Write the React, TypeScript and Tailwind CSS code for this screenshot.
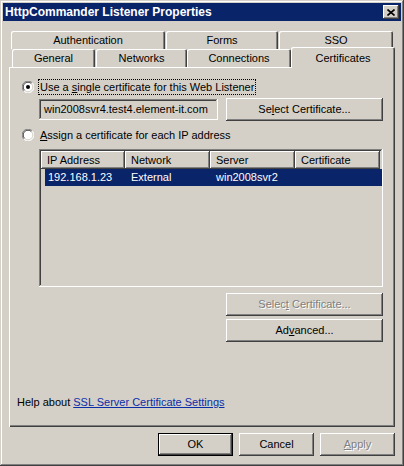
import React from "react";

const raised =
  "shadow-[inset_-1px_-1px_#404040,inset_1px_1px_#ffffff,inset_-2px_-2px_#808080,inset_2px_2px_#d4d0c8]";
const sunken =
  "shadow-[inset_-1px_-1px_#ffffff,inset_1px_1px_#808080,inset_-2px_-2px_#d4d0c8,inset_2px_2px_#404040]";
const tabShadow =
  "shadow-[inset_1px_1px_#ffffff,inset_-1px_0_#404040,inset_-2px_0_#808080]";

function Radio({ checked }: { checked?: boolean }) {
  return (
    <svg width="12" height="12" viewBox="0 0 12 12" className="shrink-0">
      <circle cx="6" cy="6" r="5.5" fill="#ffffff" />
      <path d="M10.2 1.8 A5.9 5.9 0 0 0 1.8 10.2" stroke="#808080" strokeWidth="1" fill="none" />
      <path d="M1.8 10.2 A5.9 5.9 0 0 0 10.2 1.8" stroke="#ffffff" strokeWidth="1" fill="none" />
      <path d="M9.4 2.6 A4.8 4.8 0 0 0 2.6 9.4" stroke="#404040" strokeWidth="1" fill="none" />
      <path d="M2.6 9.4 A4.8 4.8 0 0 0 9.4 2.6" stroke="#d4d0c8" strokeWidth="1" fill="none" />
      {checked && <circle cx="6" cy="6" r="2" fill="#000000" />}
    </svg>
  );
}

function Btn({
  children,
  w,
  disabled,
  def,
}: {
  children: React.ReactNode;
  w: string;
  disabled?: boolean;
  def?: boolean;
}) {
  return (
    <div
      className={`${w} h-[23px] flex items-center justify-center bg-[#d4d0c8] ${raised} ${
        def ? "border border-black" : ""
      } ${disabled ? "text-[#808080] [text-shadow:1px_1px_0_#ffffff]" : "text-black"}`}
    >
      {children}
    </div>
  );
}

function Tab({
  label,
  w,
  className = "",
}: {
  label: string;
  w: string;
  className?: string;
}) {
  return (
    <div
      className={`${w} h-[18px] flex items-center justify-center bg-[#d4d0c8] rounded-t-[2px] ${tabShadow} ${className}`}
    >
      {label}
    </div>
  );
}

export default function App() {
  return (
    <div
      className="w-[404px] h-[466px] bg-[#d4d0c8] p-[3px] flex flex-col text-[11px] text-black shadow-[inset_-1px_-1px_#404040,inset_1px_1px_#d4d0c8,inset_-2px_-2px_#808080,inset_2px_2px_#ffffff]"
      style={{ fontFamily: '"Liberation Sans", Arial, sans-serif' }}
    >
      {/* Title bar */}
      <div className="h-[18px] bg-[#0a246a] flex items-center justify-between pl-[2px] pr-[2px]">
        <span className="text-white font-bold text-[12px] leading-none">
          HttpCommander Listener Properties
        </span>
        <div
          className={`w-[16px] h-[14px] bg-[#d4d0c8] flex items-center justify-center ${raised}`}
        >
          <svg width="8" height="7" viewBox="0 0 8 7">
            <path d="M0.5 0.5 L7.5 6.5 M7.5 0.5 L0.5 6.5" stroke="#000" strokeWidth="1.6" />
          </svg>
        </div>
      </div>

      {/* Tabs row 1 */}
      <div className="flex mt-[10px] ml-[8px] gap-[1px]">
        <Tab label="Authentication" w="w-[154px]" />
        <Tab label="Forms" w="w-[112px]" />
        <Tab label="SSO" w="w-[114px]" />
      </div>
      {/* Tabs row 2 */}
      <div className="flex items-start ml-[9px] h-[18px]">
        <Tab label="General" w="w-[83px]" />
        <Tab label="Networks" w="w-[91px]" className="ml-[1px]" />
        <Tab label="Connections" w="w-[104px]" />
        <div
          className={`w-[104px] h-[21px] mt-[-2px] relative z-10 flex items-start pt-[3px] justify-center bg-[#d4d0c8] rounded-t-[2px] shadow-[inset_1px_1px_#ffffff,inset_-1px_0_#404040,inset_-2px_0_#808080]`}
        >
          Certificates
        </div>
      </div>

      {/* Panel */}
      <div className="ml-[6px] w-[386px] h-[360px] flex flex-col shadow-[inset_1px_1px_#ffffff,inset_-1px_-1px_#404040,inset_-2px_-2px_#808080]">
        {/* Radio 1 */}
        <div className="mt-[12px] h-[16px] flex items-center">
          <div className="ml-[13px]">
            <Radio checked />
          </div>
          <div className="ml-[4px] h-[16px] px-[1px] border border-dotted border-black flex items-center leading-none">
            <span>
              Use a <span className="underline">s</span>ingle certificate for this Web Listener
            </span>
          </div>
        </div>

        {/* Field + button */}
        <div className="mt-[3px] h-[23px] flex items-center">
          <div
            className={`ml-[30px] w-[179px] h-[21px] flex items-center pl-[5px] ${sunken}`}
          >
            win2008svr4.test4.element-it.com
          </div>
          <div className="ml-[8px]">
            <Btn w="w-[157px]">
              <span>
                Se<span className="underline">l</span>ect Certificate...
              </span>
            </Btn>
          </div>
        </div>

        {/* Radio 2 */}
        <div className="mt-[6px] h-[16px] flex items-center">
          <div className="ml-[13px]">
            <Radio />
          </div>
          <div className="ml-[6px] leading-none">
            <span className="underline">A</span>ssign a certificate for each IP address
          </div>
        </div>

        {/* List */}
        <div className={`mt-[6px] ml-[30px] w-[344px] h-[138px] p-[2px] ${sunken}`}>
          <div className="flex h-[18px]">
            {[
              ["IP Address", "w-[84px]"],
              ["Network", "w-[85px]"],
              ["Server", "w-[85px]"],
              ["Certificate", "w-[85px]"],
            ].map(([t, w]) => (
              <div
                key={t}
                className={`${w} h-[18px] flex items-center pl-[6px] shadow-[inset_-1px_-1px_#404040,inset_1px_1px_#ffffff,inset_-2px_-2px_#808080]`}
              >
                {t}
              </div>
            ))}
          </div>
          <div className="ml-[4px] mr-[-1px] h-[17px] bg-[#0a246a] text-white flex items-center">
            <div className="w-[80px] pl-[3px]">192.168.1.23</div>
            <div className="w-[85px] pl-[6px]">External</div>
            <div className="w-[85px] pl-[6px]">win2008svr2</div>
          </div>
        </div>

        {/* Disabled select */}
        <div className="mt-[6px] ml-[217px]">
          <Btn w="w-[157px]" disabled>
            <span>
              Selec<span className="underline">t</span> Certificate...
            </span>
          </Btn>
        </div>
        <div className="mt-[3px] ml-[217px]">
          <Btn w="w-[157px]">
            <span>
              Ad<span className="underline">v</span>anced...
            </span>
          </Btn>
        </div>

        {/* Help */}
        <div className="mt-[53px] ml-[8px] h-[14px] flex items-center">
          <span>
            Help about{" "}
            <span className="underline text-[#0b2ea8]">SSL Server Certificate Settings</span>
          </span>
        </div>
      </div>

      {/* Bottom buttons */}
      <div className="mt-[6px] flex justify-end gap-[6px] pr-[6px]">
        <Btn w="w-[75px]" def>
          OK
        </Btn>
        <Btn w="w-[75px]">Cancel</Btn>
        <Btn w="w-[75px]" disabled>
          <span>
            <span className="underline">A</span>pply
          </span>
        </Btn>
      </div>
    </div>
  );
}
